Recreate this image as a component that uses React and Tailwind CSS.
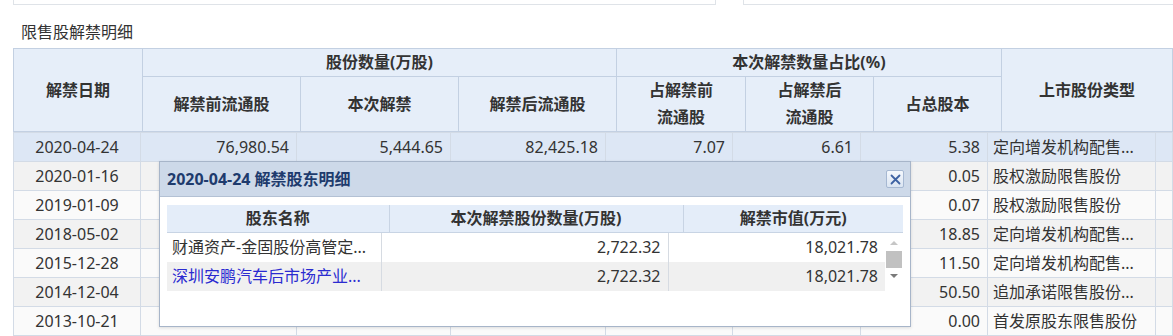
import React from "react";

// rows[1..6] sit under the popup, so their middle cells stay empty
const rows = [
  ["2020-04-24", "76,980.54", "5,444.65", "82,425.18", "7.07", "6.61", "5.38", "定向增发机构配售..."],
  ["2020-01-16", "", "", "", "", "", "0.05", "股权激励限售股份"],
  ["2019-01-09", "", "", "", "", "", "0.07", "股权激励限售股份"],
  ["2018-05-02", "", "", "", "", "", "18.85", "定向增发机构配售..."],
  ["2015-12-28", "", "", "", "", "", "11.50", "定向增发机构配售..."],
  ["2014-12-04", "", "", "", "", "", "50.50", "追加承诺限售股份..."],
  ["2013-10-21", "", "", "", "", "", "0.00", "首发原股东限售股份"],
  ["", "", "", "", "", "", "", ""],
];

const holders = [
  { name: "财通资产-金固股份高管定...", qty: "2,722.32", value: "18,021.78", link: false },
  { name: "深圳安鹏汽车后市场产业...", qty: "2,722.32", value: "18,021.78", link: true },
];

const th = "border border-[#c3d0e2] font-bold text-[16px] text-[#333] text-center leading-[27px]";
const td = "border border-[#d3dbe6] px-[7px] whitespace-nowrap overflow-hidden";

function DetailPopup() {
  return (
    <div className="absolute left-[159px] top-[161px] w-[752px] h-[166px] bg-white border border-[#a7b5c9] shadow-[0_1px_3px_rgba(0,0,0,0.12)]">
      {/* title bar */}
      <div className="h-[35px] bg-[#cdd9e9] border-b border-[#b3c1d4] flex items-center justify-between pl-[7px] pr-[6px]">
        <span className="text-[16px] font-bold text-[#1e3b6d]">2020-04-24 解禁股东明细</span>
        <button className="w-[18px] h-[18px] border border-[#a6b8d2] bg-gradient-to-b from-[#f4f8fd] to-[#dbe5f2] flex items-center justify-center rounded-[2px]">
          <svg width="11" height="11" viewBox="0 0 11 11">
            <path d="M1.5 1.5 L9.5 9.5 M9.5 1.5 L1.5 9.5" stroke="#3d62a3" strokeWidth="1.8" strokeLinecap="round" />
          </svg>
        </button>
      </div>

      <div className="px-[7px] pt-[8px]">
        <table className="table-fixed border-collapse w-[736px]">
          <colgroup>
            <col className="w-[222px]" />
            <col className="w-[294px]" />
            <col className="w-[220px]" />
          </colgroup>
          <thead>
            <tr className="bg-[#e4edf9] h-[27px]">
              <th className="font-bold text-[16px] text-[#333] text-center border-r border-[#c8d4e4] border-b">股东名称</th>
              <th className="font-bold text-[16px] text-[#333] text-center border-r border-[#c8d4e4] border-b">本次解禁股份数量(万股)</th>
              <th className="font-bold text-[16px] text-[#333] text-center border-b border-[#c8d4e4]">解禁市值(万元)</th>
            </tr>
          </thead>
        </table>
        <div className="flex">
          <table className="table-fixed border-collapse w-[718px]">
            <colgroup>
              <col className="w-[214px]" />
              <col className="w-[287px]" />
              <col className="w-[217px]" />
            </colgroup>
            <tbody>
              {holders.map((h, i) => (
                <tr key={i} className={`h-[29px] text-[16px] ${i % 2 ? "bg-[#f0f0f0]" : "bg-white"}`}>
                  <td className={`border-r border-[#d6dbe2] pl-[5px] whitespace-nowrap overflow-hidden ${h.link ? "text-[#2b2bd0]" : "text-[#333]"}`}>{h.name}</td>
                  <td className="border-r border-[#d6dbe2] pr-[7px] text-right text-[#333]">{h.qty}</td>
                  <td className="pr-[7px] text-right text-[#333]">{h.value}</td>
                </tr>
              ))}
            </tbody>
          </table>
          {/* scrollbar */}
          <div className="w-[18px] h-[58px] bg-white flex flex-col items-center">
            <svg width="10" height="6" viewBox="0 0 10 6" className="mt-[7px]">
              <path d="M1 5 L5 1 L9 5 Z" fill="#c6c6c6" />
            </svg>
            <div className="w-[16px] h-[17px] bg-[#c1c1c1] mt-[5px]" />
            <svg width="10" height="6" viewBox="0 0 10 6" className="mt-[5px]">
              <path d="M1 1 L9 1 L5 5 Z" fill="#7a7a7a" />
            </svg>
          </div>
        </div>
      </div>
    </div>
  );
}

export default function App() {
  return (
    <div
      className="relative w-[1173px] h-[336px] overflow-hidden bg-white text-[#333]"
      style={{ fontFamily: '"Noto Sans", "Noto Sans CJK SC", sans-serif' }}
    >
      {/* bottoms of panels above */}
      <div className="flex gap-[27px] pl-[13px]">
        <div className="w-[703px] h-[5px] border-x border-b border-[#dfe3e8]" />
        <div className="flex-1 h-[5px] border-l border-b border-[#dfe3e8]" />
      </div>

      <div className="pl-[21px] pt-[17px] pb-[6px] text-[16px] leading-[20px] text-[#333]">限售股解禁明细</div>

      <div className="pl-[13px]">
        <table className="table-fixed border-collapse w-[1159px] bg-[#e6eef9]">
          <colgroup>
            <col className="w-[129px]" />
            <col className="w-[158px]" />
            <col className="w-[158px]" />
            <col className="w-[158px]" />
            <col className="w-[129px]" />
            <col className="w-[128px]" />
            <col className="w-[128px]" />
            <col className="w-[171px]" />
          </colgroup>
          <thead>
            <tr className="h-[27px]">
              <th rowSpan={2} className={th}>解禁日期</th>
              <th colSpan={3} className={th}>股份数量(万股)</th>
              <th colSpan={3} className={th}>本次解禁数量占比(%)</th>
              <th rowSpan={2} className={th}>上市股份类型</th>
            </tr>
            <tr className="h-[54px]">
              <th className={th}>解禁前流通股</th>
              <th className={th}>本次解禁</th>
              <th className={th}>解禁后流通股</th>
              <th className={th}>占解禁前<br />流通股</th>
              <th className={th}>占解禁后<br />流通股</th>
              <th className={th}>占总股本</th>
            </tr>
          </thead>
        </table>

        <table className="table-fixed border-collapse w-[1159px]">
          <colgroup>
            <col className="w-[127px]" />
            <col className="w-[156px]" />
            <col className="w-[154px]" />
            <col className="w-[155px]" />
            <col className="w-[127px]" />
            <col className="w-[128px]" />
            <col className="w-[127px]" />
            <col className="w-[168px]" />
            <col className="w-[17px]" />
          </colgroup>
          <tbody>
            {rows.map((r, i) => (
              <tr
                key={i}
                className={`h-[29px] text-[16px] text-[#333] ${
                  i === 0 ? "bg-[#dde7f5]" : i % 2 ? "bg-[#f2f2f2]" : "bg-[#fafafa]"
                }`}
              >
                <td className={`${td} text-center`}>{r[0]}</td>
                <td className={`${td} text-right`}>{r[1]}</td>
                <td className={`${td} text-right`}>{r[2]}</td>
                <td className={`${td} text-right`}>{r[3]}</td>
                <td className={`${td} text-right`}>{r[4]}</td>
                <td className={`${td} text-right`}>{r[5]}</td>
                <td className={`${td} text-right`}>{r[6]}</td>
                <td className={`${td} text-left !px-[5px]`}>{r[7]}</td>
                <td className="border border-[#d3dbe6]" />
              </tr>
            ))}
          </tbody>
        </table>
      </div>

      <DetailPopup />
    </div>
  );
}
